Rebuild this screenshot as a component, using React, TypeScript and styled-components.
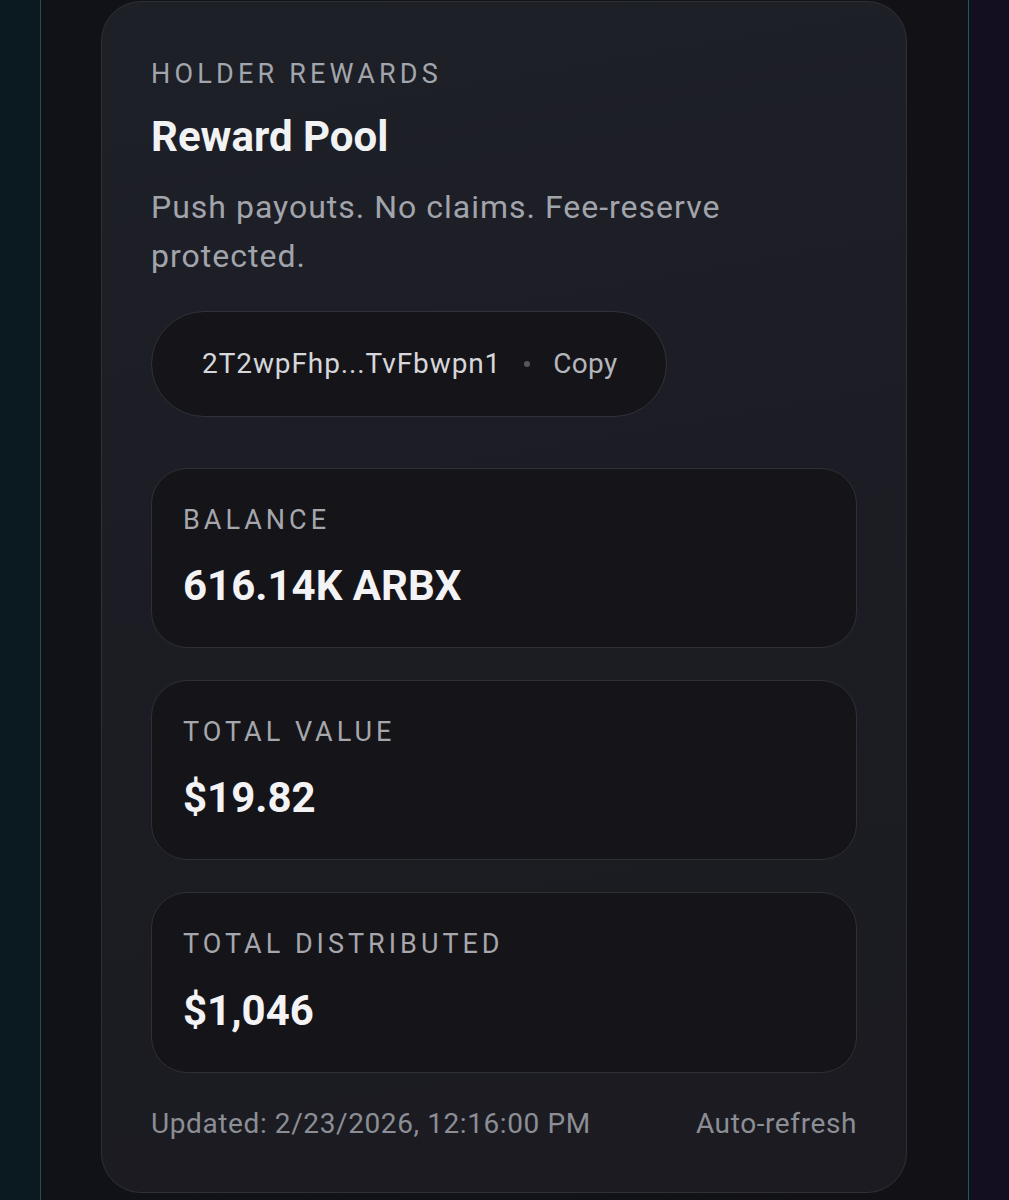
import React from "react";
import styled, { createGlobalStyle } from "styled-components";

const Global = createGlobalStyle`
  html, body { margin: 0; padding: 0; background: #0f1015; }
  body { font-family: Roboto, "Liberation Sans", Arial, sans-serif; -webkit-font-smoothing: antialiased; }
  * { box-sizing: border-box; }
`;

const Page = styled.div`
  min-height: 1200px;
  width: 1009px;
  display: flex;
  background: linear-gradient(90deg, #0b1a20 0%, #0d141b 40%, #110f1d 70%, #130f21 100%);
  overflow: hidden;
`;

const Column = styled.div`
  margin-left: 40px;
  width: 929px;
  min-height: 1200px;
  border-left: 1px solid #1e5058;
  border-right: 1px solid #1b5a5e;
  background: linear-gradient(90deg, #111218 0%, #121318 50%, #111116 100%);
  padding: 1px 0 0 60px;
`;

const Card = styled.section`
  width: 806px;
  border: 1px solid #2f3037;
  border-radius: 40px;
  background: linear-gradient(170deg, #1e2028 0%, #1c1d24 45%, #1b1b21 100%);
  padding: 56px 49px 52px 49px;
  display: flex;
  flex-direction: column;
`;

const Eyebrow = styled.div`
  font-size: 27px;
  line-height: 1.2;
  letter-spacing: 4.2px;
  color: #a3a5ac;
  text-transform: uppercase;
`;

const Title = styled.h2`
  margin: 22px 0 0;
  font-size: 42px;
  line-height: 1.2;
  font-weight: 700;
  letter-spacing: 0;
  color: #f1f2f4;
`;

const Subtitle = styled.p`
  margin: 20px 0 0;
  font-size: 32px;
  line-height: 49px;
  letter-spacing: 1px;
  color: #a2a4ab;
  max-width: 620px;
`;

const AddressPill = styled.div`
  margin-top: 30px;
  align-self: flex-start;
  display: flex;
  align-items: center;
  gap: 23px;
  height: 106px;
  padding: 0 49px 0 50px;
  border: 1px solid #313239;
  border-radius: 999px;
  background: #141419;
  font-size: 28px;
  color: #d6d7db;
`;

const Address = styled.span`
  letter-spacing: 0.9px;
`;

const Dot = styled.span`
  width: 6px;
  height: 6px;
  border-radius: 50%;
  background: #55575e;
`;

const CopyLink = styled.span`
  color: #b4b6bc;
  font-size: 28px;
  letter-spacing: 0.3px;
`;

const Stats = styled.div`
  margin-top: 51px;
  display: flex;
  flex-direction: column;
  gap: 32px;
`;

const StatBox = styled.div`
  border: 1px solid #2f3037;
  border-radius: 36px;
  background: #151419;
  padding: 35px 31px 35.5px;
  display: flex;
  flex-direction: column;
  gap: 25px;
`;

const StatLabel = styled.div`
  font-size: 27px;
  line-height: 1.2;
  letter-spacing: 4px;
  color: #a5a7ad;
  text-transform: uppercase;
`;

const StatValue = styled.div`
  font-size: 42px;
  line-height: 1.2;
  font-weight: 700;
  color: #f3f3f5;
`;

const Footer = styled.div`
  margin-top: 34px;
  display: flex;
  justify-content: space-between;
  align-items: center;
  font-size: 28px;
  line-height: 1.2;
  letter-spacing: 0.6px;
  color: #8c8e95;
`;

const stats = [
  { label: "Balance", value: "616.14K ARBX" },
  { label: "Total Value", value: "$19.82" },
  { label: "Total Distributed", value: "$1,046" },
];

export default function App() {
  return (
    <>
      <Global />
      <Page>
        <Column>
          <Card>
            <Eyebrow>Holder Rewards</Eyebrow>
            <Title>Reward Pool</Title>
            <Subtitle>Push payouts. No claims. Fee-reserve protected.</Subtitle>
            <AddressPill>
              <Address>2T2wpFhp...TvFbwpn1</Address>
              <Dot />
              <CopyLink>Copy</CopyLink>
            </AddressPill>
            <Stats>
              {stats.map((s) => (
                <StatBox key={s.label}>
                  <StatLabel>{s.label}</StatLabel>
                  <StatValue>{s.value}</StatValue>
                </StatBox>
              ))}
            </Stats>
            <Footer>
              <span>Updated: 2/23/2026, 12:16:00 PM</span>
              <span>Auto-refresh</span>
            </Footer>
          </Card>
        </Column>
      </Page>
    </>
  );
}
